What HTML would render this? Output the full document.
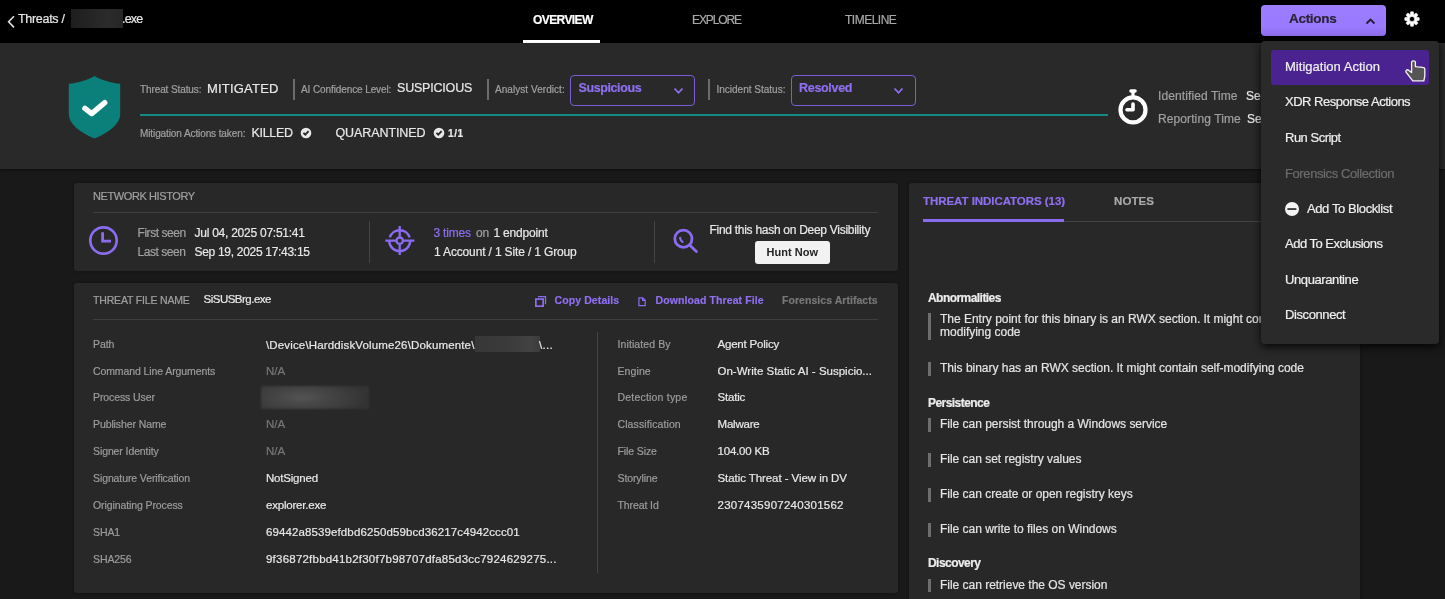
<!DOCTYPE html>
<html><head><meta charset="utf-8">
<style>
*{margin:0;padding:0;box-sizing:border-box}
html,body{width:1445px;height:599px;overflow:hidden;background:#191919;font-family:"Liberation Sans",sans-serif;color:#e6e6e6;-webkit-font-smoothing:antialiased}
#root{position:absolute;left:0;top:0;width:1445px;height:599px;will-change:transform}
.a{position:absolute}
.t{position:absolute;white-space:nowrap;line-height:1;-webkit-text-stroke:0.2px currentColor}
.g{color:#a0a0a0}
.w{color:#e8e8e8}
.p{color:#8f6ff0}
.b{font-weight:bold}
.panel{position:absolute;background:#282828;border-radius:3px;box-shadow:0 0 3px rgba(0,0,0,0.35)}
.hsep{position:absolute;height:1px;background:#3e3e3e}
.vsep{position:absolute;width:1px;background:#444}
.div{position:absolute;width:1.5px;background:#6c6c6c}
.lab{font-size:10.5px;letter-spacing:-0.1px;color:#9c9c9c}
.val{font-size:11.5px;letter-spacing:-0.2px;color:#e8e8e8}
.na{font-size:11.5px;color:#787878}
.ind{font-size:12px;letter-spacing:-0.02px;color:#e4e4e4}
.bar{position:absolute;left:928px;width:2.5px;height:13.5px;background:#6e6e6e}
.cat{font-size:12px;letter-spacing:-0.55px;font-weight:bold;color:#ececec}
.mi{font-size:13px;letter-spacing:-0.4px;color:#f0f0f0}
</style></head><body><div id="root">
<!-- header -->
<div class="a" style="left:0;top:0;width:1445px;height:43px;background:#000"></div>
<svg class="a" style="left:6px;top:15px" width="10" height="14" viewBox="0 0 10 14"><path d="M8 1.2 L2.6 6.8 L8 12.4" stroke="#e0e0e0" stroke-width="1.6" fill="none"/></svg>
<div class="t w" style="left:18px;top:12.5px;font-size:12.5px;letter-spacing:-0.3px">Threats /</div>
<div class="a" style="left:71px;top:9px;width:52px;height:19px;background:linear-gradient(90deg,#1e1e1e,#242424 35%,#2b2b2b 70%,#262626)"></div>
<div class="t w" style="left:122px;top:12.5px;font-size:12.5px;letter-spacing:-0.8px">.exe</div>
<div class="t b" style="left:533px;top:14px;font-size:12px;color:#fff;letter-spacing:-0.6px">OVERVIEW</div>
<div class="a" style="left:523px;top:40px;width:77px;height:3px;background:#fff"></div>
<div class="t" style="left:692px;top:14px;font-size:12px;color:#a8a8a8;letter-spacing:-1.1px">EXPLORE</div>
<div class="t" style="left:845px;top:14px;font-size:12px;color:#a8a8a8;letter-spacing:-0.5px">TIMELINE</div>
<div class="a" style="left:1261px;top:5px;width:125px;height:31px;border-radius:4px;background:linear-gradient(#9c7cff 0%,#9a7aff 70%,#8d6ce8 100%)"></div>
<div class="t b" style="left:1289px;top:12px;font-size:13.5px;color:#2a2438;letter-spacing:-0.3px">Actions</div>
<svg class="a" style="left:1365px;top:17.2px" width="11" height="8" viewBox="0 0 11 8"><path d="M1.5 6.5 L5.5 2.5 L9.5 6.5" stroke="#221d30" stroke-width="1.8" fill="none"/></svg>
<svg class="a" style="left:1404px;top:11px" width="16" height="16" viewBox="0 0 16 16"><path fill="#fff" stroke="#fff" stroke-width="0.6" stroke-linejoin="round" fill-rule="evenodd" d="M6.28 3.20 L6.66 0.82 L9.34 0.82 L9.72 3.20 L10.18 3.39 L12.12 1.98 L14.02 3.88 L12.61 5.82 L12.80 6.28 L15.18 6.66 L15.18 9.34 L12.80 9.72 L12.61 10.18 L14.02 12.12 L12.12 14.02 L10.18 12.61 L9.72 12.80 L9.34 15.18 L6.66 15.18 L6.28 12.80 L5.82 12.61 L3.88 14.02 L1.98 12.12 L3.39 10.18 L3.20 9.72 L0.82 9.34 L0.82 6.66 L3.20 6.28 L3.39 5.82 L1.98 3.88 L3.88 1.98 L5.82 3.39Z M8 5.4 A2.6 2.6 0 1 0 8 10.6 A2.6 2.6 0 1 0 8 5.4Z"/></svg>

<!-- top panel -->
<div class="a" style="left:0;top:43px;width:1445px;height:126px;background:#292929;box-shadow:0 1px 2px rgba(0,0,0,0.5)"></div>
<svg class="a" style="left:68px;top:75.5px" width="53" height="63" viewBox="0 0 53 63"><path d="M26.5 0 C20 4 10 7 0.8 7.8 V38 C0.8 48 12 56.5 26.5 62.5 C41 56.5 52.2 48 52.2 38 V7.8 C43 7 33 4 26.5 0Z" fill="#0b807b"/><path d="M16.9 32.3 L23.7 37.6 L36.8 26.6" stroke="#fff" stroke-width="5.3" fill="none" stroke-linecap="round" stroke-linejoin="round"/></svg>
<div class="t g" style="left:140px;top:85px;font-size:10px;letter-spacing:-0.1px">Threat Status:</div>
<div class="t w" style="left:207px;top:81.5px;font-size:13px;letter-spacing:0.2px">MITIGATED</div>
<div class="div" style="left:293px;top:79px;height:21px"></div>
<div class="t g" style="left:301px;top:85px;font-size:10px;letter-spacing:-0.1px">AI Confidence Level:</div>
<div class="t w" style="left:397px;top:82px;font-size:12.5px;letter-spacing:-0.2px">SUSPICIOUS</div>
<div class="div" style="left:487px;top:79px;height:21px"></div>
<div class="t g" style="left:495px;top:85px;font-size:10px;letter-spacing:0.05px">Analyst Verdict:</div>
<div class="a" style="left:570px;top:74.5px;width:125px;height:31px;border:1.5px solid #7b5dd6;border-radius:4px"></div>
<div class="t b p" style="left:578.5px;top:82px;font-size:12.5px;letter-spacing:-0.4px">Suspicious</div>
<svg class="a" style="left:673px;top:87px" width="11" height="8" viewBox="0 0 11 8"><path d="M1.5 1.5 L5.5 5.8 L9.5 1.5" stroke="#8f6ff0" stroke-width="1.8" fill="none"/></svg>
<div class="div" style="left:708px;top:79px;height:21px"></div>
<div class="t g" style="left:716.5px;top:85px;font-size:10px;letter-spacing:0px">Incident Status:</div>
<div class="a" style="left:791px;top:74.5px;width:125px;height:31px;border:1.5px solid #7b5dd6;border-radius:4px"></div>
<div class="t b p" style="left:799px;top:82px;font-size:12.5px;letter-spacing:-0.3px">Resolved</div>
<svg class="a" style="left:893px;top:87px" width="11" height="8" viewBox="0 0 11 8"><path d="M1.5 1.5 L5.5 5.8 L9.5 1.5" stroke="#8f6ff0" stroke-width="1.8" fill="none"/></svg>
<div class="a" style="left:140px;top:114px;width:968px;height:2px;background:#138a85"></div>
<div class="t g" style="left:140px;top:128.5px;font-size:10px;letter-spacing:-0.1px">Mitigation Actions taken:</div>
<div class="t w" style="left:251.5px;top:126.5px;font-size:12.5px;letter-spacing:-0.3px">KILLED</div>
<svg class="a" style="left:300px;top:126.5px" width="12" height="12" viewBox="0 0 12 12"><circle cx="6" cy="6" r="5.3" fill="#e8e8e8"/><path d="M3.4 5.9 L5.3 7.6 L8.6 4.1" stroke="#282828" stroke-width="1.9" fill="none"/></svg>
<div class="t w" style="left:335.5px;top:126.5px;font-size:12.5px;letter-spacing:-0.1px">QUARANTINED</div>
<svg class="a" style="left:433px;top:126.5px" width="12" height="12" viewBox="0 0 12 12"><circle cx="6" cy="6" r="5.3" fill="#e8e8e8"/><path d="M3.4 5.9 L5.3 7.6 L8.6 4.1" stroke="#282828" stroke-width="1.9" fill="none"/></svg>
<div class="t b w" style="left:448px;top:128.5px;font-size:10px;letter-spacing:0.6px">1/1</div>
<svg class="a" style="left:1117px;top:88px" width="32" height="38" viewBox="0 0 32 38"><rect x="12.2" y="1.2" width="7.6" height="3.6" rx="1.8" fill="#fff"/><rect x="14.4" y="3" width="3.2" height="5.5" fill="#fff"/><circle cx="16" cy="21.9" r="12.5" stroke="#fff" stroke-width="4.2" fill="none"/><path d="M16 16 V21.8 H10" stroke="#fff" stroke-width="3.6" fill="none" stroke-linecap="round" stroke-linejoin="round"/></svg>
<div class="t g" style="left:1158px;top:89.5px;font-size:12px;letter-spacing:0.1px">Identified Time</div>
<div class="t w" style="left:1246px;top:89.5px;font-size:12px">Se</div>
<div class="t g" style="left:1158px;top:112.5px;font-size:12px;letter-spacing:0.1px">Reporting Time</div>
<div class="t w" style="left:1247px;top:112.5px;font-size:12px">Se</div>

<!-- network history panel -->
<div class="panel" style="left:74px;top:183px;width:824px;height:88px"></div>
<div class="t g" style="left:93px;top:191px;font-size:11px;letter-spacing:-0.4px">NETWORK HISTORY</div>
<div class="hsep" style="left:93px;top:212px;width:785px"></div>
<svg class="a" style="left:88px;top:225px" width="31" height="31" viewBox="0 0 31 31"><circle cx="15.5" cy="15.5" r="13.2" stroke="#8b6cf0" stroke-width="2.7" fill="none"/><path d="M14.6 7.3 V16.2 H23" stroke="#8b6cf0" stroke-width="2.8" fill="none"/></svg>
<div class="t g" style="left:137.5px;top:226.5px;font-size:12px;letter-spacing:-0.45px">First seen</div>
<div class="t w" style="left:194.5px;top:226.5px;font-size:12px;letter-spacing:-0.25px">Jul 04, 2025 07:51:41</div>
<div class="t g" style="left:137.5px;top:246px;font-size:12px;letter-spacing:-0.45px">Last seen</div>
<div class="t w" style="left:194.5px;top:246px;font-size:12px;letter-spacing:-0.3px">Sep 19, 2025 17:43:15</div>
<div class="vsep" style="left:369px;top:221px;height:42px"></div>
<svg class="a" style="left:385px;top:226px" width="30" height="30" viewBox="0 0 30 30"><path d="M25.2 14.7 A10.5 10.5 0 0 1 4.2 14.7 M4.71 11.46 A10.5 10.5 0 0 1 24.69 11.46" stroke="#8b6cf0" stroke-width="2.4" fill="none"/><circle cx="14.7" cy="14.7" r="3.2" stroke="#8b6cf0" stroke-width="2.3" fill="none"/><path d="M14.7 0 V11.5 M14.7 17.9 V29 M0.3 14.7 H11.5 M17.9 14.7 H29.4" stroke="#8b6cf0" stroke-width="2.3"/></svg>
<div class="t p" style="left:433.5px;top:226.5px;font-size:12px;letter-spacing:-0.2px">3 times</div>
<div class="t g" style="left:476px;top:226.5px;font-size:12px;letter-spacing:-0.2px">on</div>
<div class="t w" style="left:493.5px;top:226.5px;font-size:12px;letter-spacing:-0.2px">1 endpoint</div>
<div class="t w" style="left:434px;top:246px;font-size:12px;letter-spacing:-0.15px">1 Account / 1 Site / 1 Group</div>
<div class="vsep" style="left:654px;top:221px;height:42px"></div>
<svg class="a" style="left:672px;top:228px" width="27" height="27" viewBox="0 0 27 27"><circle cx="11.4" cy="10.7" r="8.6" stroke="#8b6cf0" stroke-width="2.8" fill="none"/><path d="M17.6 17.1 L24.4 23.6" stroke="#8b6cf0" stroke-width="2.8" stroke-linecap="round"/><path d="M8.1 9.9 Q8.5 12.8 10.5 13.9" stroke="#8b6cf0" stroke-width="2.2" stroke-linecap="round" fill="none"/></svg>
<div class="t w" style="left:709.5px;top:224px;font-size:12px;letter-spacing:-0.28px">Find this hash on Deep Visibility</div>
<div class="a" style="left:755px;top:241px;width:75px;height:23px;background:#f2f2f2;border-radius:3px"></div>
<div class="t b" style="left:766.5px;top:247px;font-size:11px;color:#242424;letter-spacing:0.05px;-webkit-text-stroke:0">Hunt Now</div>

<!-- file panel -->
<div class="panel" style="left:74px;top:283px;width:824px;height:310px"></div>
<div class="t g" style="left:93px;top:295px;font-size:10.5px;letter-spacing:-0.17px">THREAT FILE NAME</div>
<div class="t w" style="left:203.5px;top:294px;font-size:11.5px;letter-spacing:-0.5px">SiSUSBrg.exe</div>
<svg class="a" style="left:534px;top:295px" width="13" height="13" viewBox="0 0 13 13"><rect x="1.85" y="4.05" width="7.3" height="7.1" stroke="#8b6cf0" stroke-width="1.7" fill="none"/><path d="M4 1.6 H11.5 V9.2" stroke="#8b6cf0" stroke-width="1.3" fill="none"/></svg>
<div class="t b p" style="left:554.5px;top:295px;font-size:10.5px;letter-spacing:0.1px">Copy Details</div>
<svg class="a" style="left:637px;top:296px" width="10" height="11" viewBox="0 0 10 11"><path d="M1.9 1.8 H5.8 L8.2 4.2 V9.6 H1.9 Z M5.6 1.8 V4.3 H8.2" stroke="#8b6cf0" stroke-width="1.2" fill="none"/></svg>
<div class="t b p" style="left:655.5px;top:295px;font-size:10.5px;letter-spacing:0.1px">Download Threat File</div>
<div class="t b" style="left:782px;top:295px;font-size:10.5px;color:#777;letter-spacing:0.05px">Forensics Artifacts</div>
<div class="hsep" style="left:93px;top:319px;width:785px"></div>
<div class="vsep" style="left:597px;top:332px;height:241px"></div>

<div class="t lab" style="left:93px;top:339px">Path</div>
<div class="t val" style="left:266px;top:339.5px;letter-spacing:0.15px">\Device\HarddiskVolume26\Dokumente\</div>
<div class="a" style="left:475px;top:336px;width:65px;height:16px;background:linear-gradient(90deg,#373737,#3b3b3b 50%,#424242 85%,#3c3c3c)"></div>
<div class="t val" style="left:539px;top:339.5px;letter-spacing:0.3px">\...</div>
<div class="t lab" style="left:93px;top:365.5px">Command Line Arguments</div>
<div class="t na" style="left:266px;top:365.5px">N/A</div>
<div class="t lab" style="left:93px;top:392px">Process User</div>
<div class="a" style="left:261px;top:385.5px;width:108px;height:23px;background:radial-gradient(ellipse 60% 90% at 38% 50%,#545454 0%,#474747 35%,#3b3b3b 75%,#333 100%);filter:blur(1.2px)"></div>
<div class="t lab" style="left:93px;top:419px">Publisher Name</div>
<div class="t na" style="left:266px;top:419px">N/A</div>
<div class="t lab" style="left:93px;top:445.5px">Signer Identity</div>
<div class="t na" style="left:266px;top:445.5px">N/A</div>
<div class="t lab" style="left:93px;top:472.5px">Signature Verification</div>
<div class="t val" style="left:266px;top:472.5px">NotSigned</div>
<div class="t lab" style="left:93px;top:499.5px">Originating Process</div>
<div class="t val" style="left:266px;top:499.5px">explorer.exe</div>
<div class="t lab" style="left:93px;top:526.5px">SHA1</div>
<div class="t val" style="left:266px;top:526.5px;letter-spacing:0.11px">69442a8539efdbd6250d59bcd36217c4942ccc01</div>
<div class="t lab" style="left:93px;top:553.5px">SHA256</div>
<div class="t val" style="left:266px;top:553.5px;letter-spacing:0.22px">9f36872fbbd41b2f30f7b98707dfa85d3cc7924629275...</div>

<div class="t lab" style="left:617.5px;top:339px;letter-spacing:0.1px">Initiated By</div>
<div class="t val" style="left:717.5px;top:339px">Agent Policy</div>
<div class="t lab" style="left:617.5px;top:365.5px;letter-spacing:0.1px">Engine</div>
<div class="t val" style="left:717.5px;top:365.5px;letter-spacing:0px">On-Write Static AI - Suspicio...</div>
<div class="t lab" style="left:617.5px;top:392px;letter-spacing:0.2px">Detection type</div>
<div class="t val" style="left:717.5px;top:392px">Static</div>
<div class="t lab" style="left:617.5px;top:419px;letter-spacing:0.1px">Classification</div>
<div class="t val" style="left:717.5px;top:419px">Malware</div>
<div class="t lab" style="left:617.5px;top:445.5px">File Size</div>
<div class="t val" style="left:717.5px;top:445.5px">104.00 KB</div>
<div class="t lab" style="left:617.5px;top:472.5px">Storyline</div>
<div class="t val" style="left:717.5px;top:472.5px;letter-spacing:-0.07px">Static Threat - View in DV</div>
<div class="t lab" style="left:617.5px;top:499.5px">Threat Id</div>
<div class="t val" style="left:717.5px;top:499.5px;letter-spacing:0.25px">2307435907240301562</div>

<!-- threat indicators panel -->
<div class="panel" style="left:909px;top:183px;width:451px;height:420px"></div>
<div class="t b p" style="left:923px;top:196px;font-size:11.5px;letter-spacing:-0.05px">THREAT INDICATORS (13)</div>
<div class="t b" style="left:1114px;top:196px;font-size:11.5px;color:#aaa;letter-spacing:0.1px">NOTES</div>
<div class="hsep" style="left:923px;top:221px;width:425px;background:#444"></div>
<div class="a" style="left:923px;top:219px;width:141px;height:3px;background:#8b6cf0"></div>
<div class="t cat" style="left:928px;top:292px">Abnormalities</div>
<div class="a" style="left:928px;top:312.5px;width:2.5px;height:27px;background:#6e6e6e"></div>
<div class="t ind" style="left:940px;top:312.5px;line-height:13.5px;white-space:normal;width:420px">The Entry point for this binary is an RWX section. It might contain self-<br>modifying code</div>
<div class="bar" style="top:362px"></div>
<div class="t ind" style="left:940px;top:361.5px">This binary has an RWX section. It might contain self-modifying code</div>
<div class="t cat" style="left:928px;top:396.5px">Persistence</div>
<div class="bar" style="top:418px"></div>
<div class="t ind" style="left:940px;top:418px">File can persist through a Windows service</div>
<div class="bar" style="top:453px"></div>
<div class="t ind" style="left:940px;top:453px">File can set registry values</div>
<div class="bar" style="top:488px"></div>
<div class="t ind" style="left:940px;top:487.5px">File can create or open registry keys</div>
<div class="bar" style="top:523px"></div>
<div class="t ind" style="left:940px;top:523px">File can write to files on Windows</div>
<div class="t cat" style="left:928px;top:557px">Discovery</div>
<div class="bar" style="top:578.5px"></div>
<div class="t ind" style="left:940px;top:578.5px">File can retrieve the OS version</div>

<!-- actions menu -->
<div class="a" style="left:1261px;top:41px;width:178px;height:303px;background:#2a2a2a;border-radius:4px;box-shadow:0 3px 9px rgba(0,0,0,0.85)"></div>
<div class="a" style="left:1271px;top:50px;width:158px;height:35px;background:#4a2391;border-radius:3px"></div>
<div class="t mi" style="left:1285px;top:59.5px;letter-spacing:0.02px">Mitigation Action</div>
<div class="t mi" style="left:1285px;top:95px;letter-spacing:-0.5px">XDR Response Actions</div>
<div class="t mi" style="left:1285px;top:130.5px;letter-spacing:-0.5px">Run Script</div>
<div class="t mi" style="left:1285px;top:166.5px;color:#6c6c6c">Forensics Collection</div>
<svg class="a" style="left:1285px;top:202px" width="14" height="14" viewBox="0 0 14 14"><circle cx="7" cy="7" r="7" fill="#f4f4f4"/><rect x="2.4" y="6.2" width="9" height="1.7" fill="#2a2a2a"/></svg>
<div class="t mi" style="left:1307px;top:201.5px">Add To Blocklist</div>
<div class="t mi" style="left:1285px;top:237px;letter-spacing:-0.5px">Add To Exclusions</div>
<div class="t mi" style="left:1285px;top:272.5px">Unquarantine</div>
<div class="t mi" style="left:1285px;top:308px">Disconnect</div>
<svg class="a" style="left:1404.5px;top:59.5px" width="21" height="22" viewBox="0 0 21 22"><path d="M6.6 2.2 C6.6 0.4 10.4 0.4 10.4 2.2 V6.6 L13 6.9 L15.4 7.1 L17.6 7.4 C19 7.5 19.8 8.3 19.8 9.3 V16.2 L18.8 20.8 H7.8 L1.2 12.4 C0.2 11 1.8 9.2 3.3 10 L6.6 12.6 Z" fill="#555" stroke="#f4f4f4" stroke-width="1.3" stroke-linejoin="round"/></svg>
</div></body></html>
